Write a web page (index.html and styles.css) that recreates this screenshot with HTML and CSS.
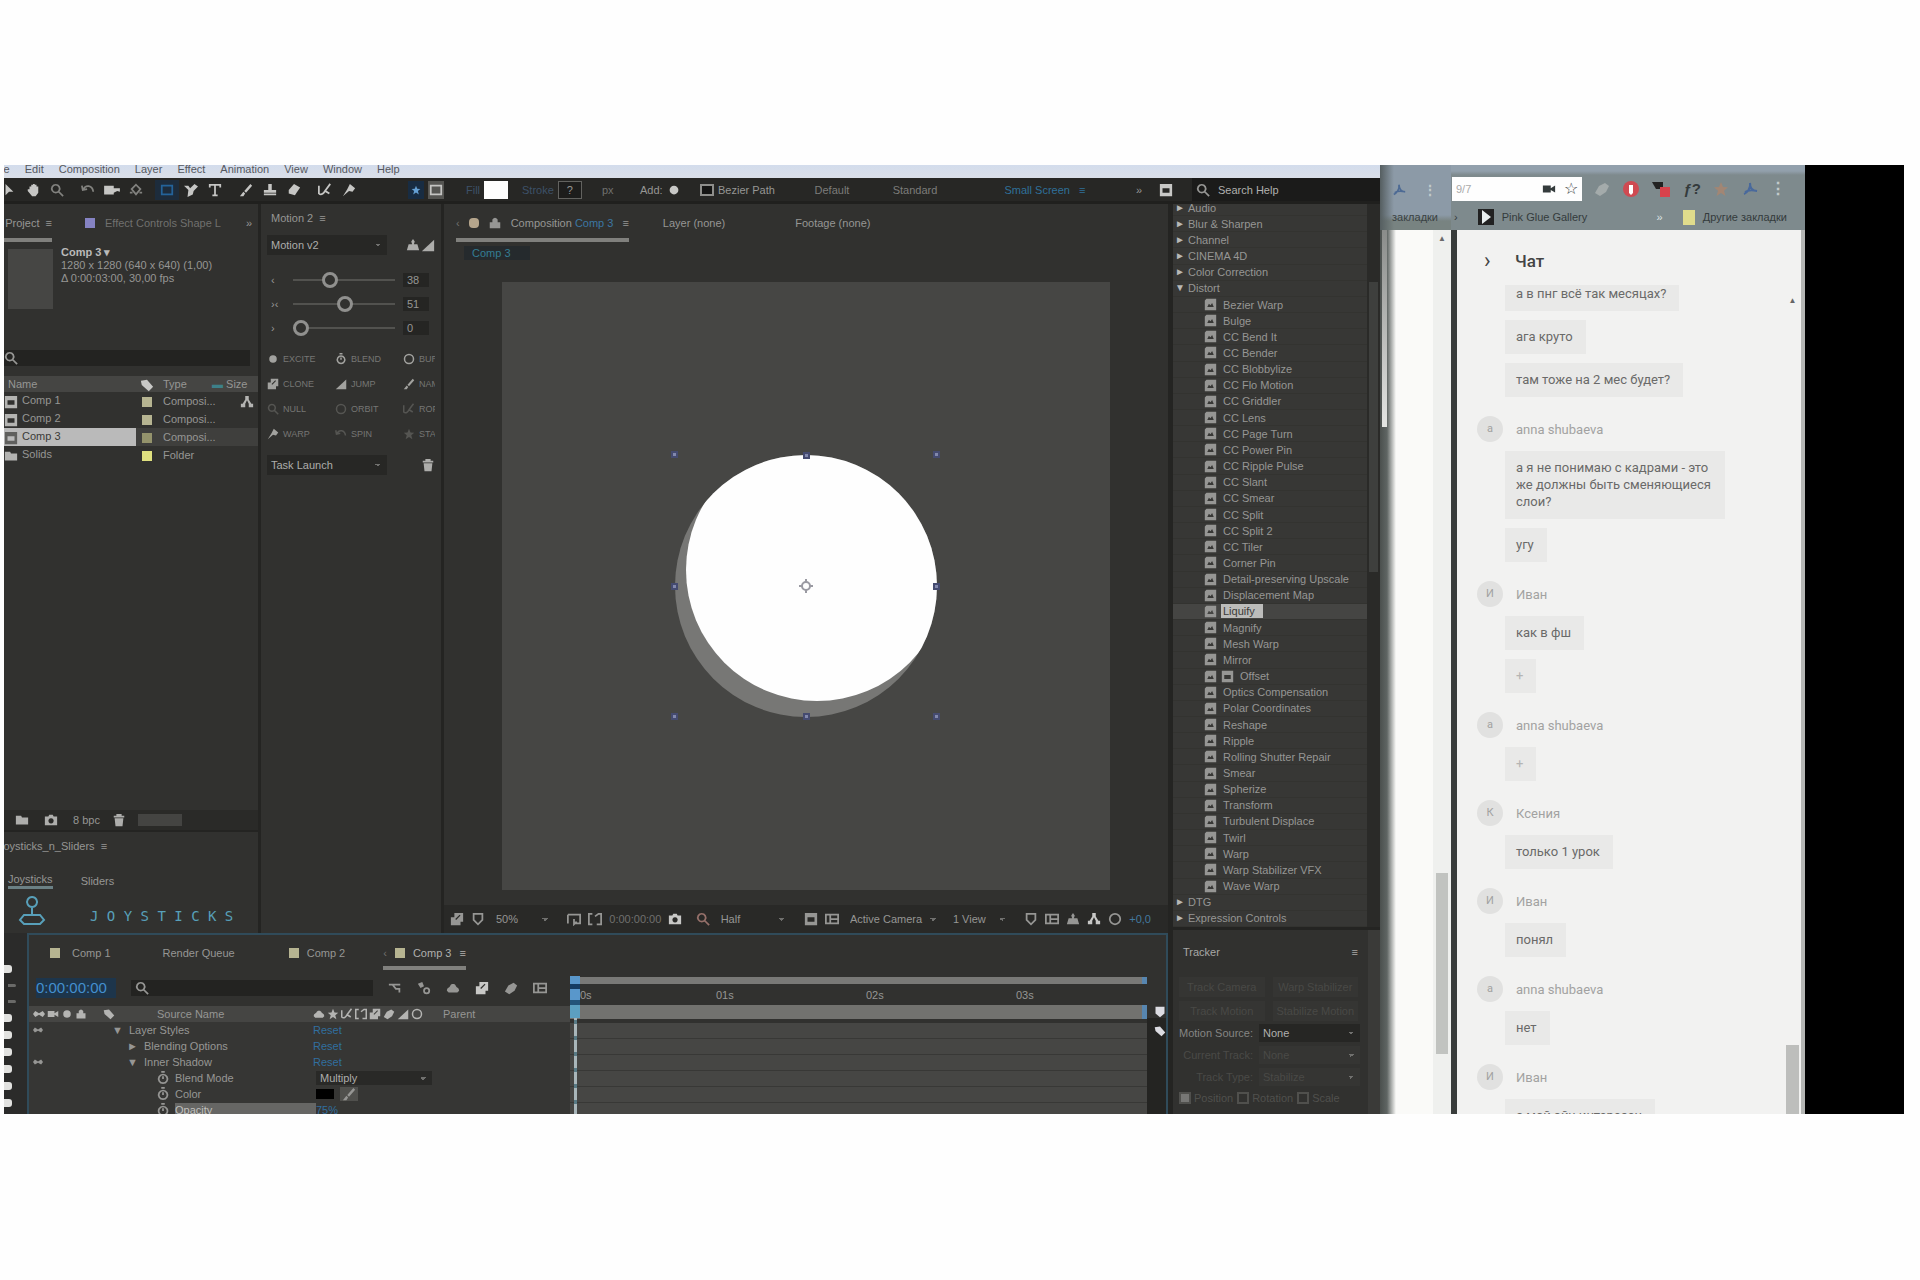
FILE: index.html
```html
<!DOCTYPE html>
<html lang="ru">
<head>
  <meta charset="UTF-8">
  <title>Вебинар</title>
  <meta name="viewport" content="width=device-width, initial-scale=1.0">
  <link rel="stylesheet" href="styles.css">
</head>
<body>

<svg class="sprite" aria-hidden="true">
  <symbol id="arrow" viewBox="0 0 16 16"><path d="M4 1l9 9H8l-4 4z"/></symbol>
  <symbol id="hand" viewBox="0 0 16 16"><path d="M4 7V4h2V2h2V1h2v1h2v2h2v7l-3 4H7L2 9V7z"/></symbol>
  <symbol id="zoom" viewBox="0 0 16 16"><path class="ln" d="M10 10l5 5M6.500 2a4.500 4.500 0 1 0 .1 0z"/></symbol>
  <symbol id="rotate" viewBox="0 0 16 16"><path class="ln" d="M3 7c2-5 10-5 11 3M1 3l1 5 5-1"/></symbol>
  <symbol id="camera" viewBox="0 0 20 16"><path d="M1 3h11v3h7v4l-3-1-4 2v2H1z"/></symbol>
  <symbol id="orbit" viewBox="0 0 16 16"><path class="ln" d="M8 2l5 5-5 6-5-6zM1 11h3M12 11h3"/></symbol>
  <symbol id="rect" viewBox="0 0 16 16"><rect class="ln" x="2" y="3" width="12" height="10"/></symbol>
  <symbol id="pen" viewBox="0 0 16 16"><path d="M0 3h5l2 3 5-5 4 3-5 5-1 4-6 3 1-8z"/></symbol>
  <symbol id="type" viewBox="0 0 16 16"><path class="ln" d="M2 5V2h12v3M8 2v12M5 14h6"/></symbol>
  <symbol id="brush" viewBox="0 0 16 16"><path d="M13 1l2 2-7 8-2-2zM5 10l2 2-2 3H1z"/></symbol>
  <symbol id="stamp" viewBox="0 0 16 16"><path d="M6 1h4v7h5v3H1V8h5zM1 12h14v2H1z"/></symbol>
  <symbol id="eraser" viewBox="0 0 16 16"><path d="M8 1l7 4-6 9-7-2V8z"/></symbol>
  <symbol id="roto" viewBox="0 0 16 16"><path class="ln" d="M1 3v9c3 3 6-1 7-3l6-8M8 9l5 3"/></symbol>
  <symbol id="flow" viewBox="0 0 16 16"><path class="ln" d="M1 4h13M5 4l4 5h4v4"/></symbol>
  <symbol id="pin" viewBox="0 0 16 16"><path d="M9 1l6 5-3 4-4-1-7 6 5-8z"/></symbol>
  <symbol id="draft" viewBox="0 0 16 16"><path d="M1 3l5-2 2 5-4 2z"/><circle class="ln" cx="11" cy="11" r="3"/></symbol>
  <symbol id="lock" viewBox="0 0 16 16"><path d="M5 7V4q3-4 6 0v3h3v7H2V7z"/></symbol>
  <symbol id="photo" viewBox="0 0 16 16"><path fill-rule="evenodd" d="M1 4h4l1-2h4l1 2h4v10H1zM8 6a3 3 0 1 0 .1 0z"/></symbol>
  <symbol id="preset" viewBox="0 0 16 16"><path fill-rule="evenodd" d="M3 1h12v14H1V3zM4 11h8l-2-5-2 3-2-2z"/></symbol>
  <symbol id="folder" viewBox="0 0 16 16"><path d="M1 3h6l1 2h7v8H1z"/></symbol>
  <symbol id="comp" viewBox="0 0 16 16"><path fill-rule="evenodd" d="M1 1h14v14H1zM4 6v5h8V6z"/></symbol>
  <symbol id="tag" viewBox="0 0 16 16"><path d="M1 3l7-1 7 8-5 5-8-7z"/></symbol>
  <symbol id="tree" viewBox="0 0 16 16"><path d="M6 1h4v4l3 5h2v4h-5v-4L8 6l-2 4v4H1v-4h2l3-5z"/></symbol>
  <symbol id="trash" viewBox="0 0 16 16"><path d="M5 1h6v2h3v2H2V3h3zM3 6h10l-1 9H4z"/></symbol>
  <symbol id="watch" viewBox="0 0 16 16"><path class="ln" d="M6 1h4M8 4a5 5 0 1 0 .1 0zM8 6v3"/></symbol>
  <symbol id="ball" viewBox="0 0 16 16"><circle class="ln" cx="8" cy="8" r="6"/></symbol>
  <symbol id="dot" viewBox="0 0 16 16"><circle cx="8" cy="8" r="5"/></symbol>
  <symbol id="star" viewBox="0 0 16 16"><path d="M8 1l2 5 5 .3-4 3.400L12.500 15 8 12l-4.500 3L5 9.700 1 6.300 6 6z"/></symbol>
  <symbol id="mask" viewBox="0 0 16 16"><path class="ln" d="M1 3h14v10H8M1 13V3M8 8v6l3-3"/></symbol>
  <symbol id="shield" viewBox="0 0 16 16"><path class="ln" d="M3 2h10v7l-5 5-5-5z"/></symbol>
  <symbol id="frame" viewBox="0 0 16 16"><path class="ln" d="M5 2H1v12h4M8 5l4-3h3v12h-5"/></symbol>
  <symbol id="grid" viewBox="0 0 16 16"><path class="ln" d="M1 3h14v10H1zM6 3v10M6 8h9"/></symbol>
  <symbol id="people" viewBox="0 0 16 16"><path d="M8 1l2 3-1 3h4l2 7H1l2-7h4L6 4z"/></symbol>
  <symbol id="shy" viewBox="0 0 16 16"><path d="M1 11c0-4 3-3 4-6 1-2 5-2 6 0 1 3 4 2 4 6l-2 2H3z"/></symbol>
  <symbol id="cubes" viewBox="0 0 16 16"><path fill-rule="evenodd" d="M5 1h10v10h-3v4H1V6h4zM7 9l5-5-1-1-5 5z"/></symbol>
  <symbol id="blur" viewBox="0 0 16 16"><path d="M5 5l6-3 4 3-3 6-6 4-5-3z"/></symbol>
  <symbol id="eye" viewBox="0 0 16 16"><path d="M0 8l3-4 5 3 5-3 3 4-3 4-5-3-5 3z"/></symbol>
  <symbol id="slope" viewBox="0 0 16 16"><path d="M1 15L15 2v13z"/></symbol>
  <symbol id="video" viewBox="0 0 16 16"><path d="M1 4h9v3l5-3v8l-5-3v3H1z"/></symbol>
  <symbol id="marker" viewBox="0 0 16 16"><path d="M2 1h12v9l-6 5-6-5z"/></symbol>
  <symbol id="joystick" viewBox="0 0 28 30"><path class="ln" d="M14 2a5 5 0 1 0 .1 0zM14 12v8M6 20h16l4 5-4 4H6l-4-4z"/></symbol>
  <symbol id="acro" viewBox="0 0 16 16"><path class="ln" d="M8 2c1 5-3 10-6 11M8 2c0 5 3 8 7 8M3 11c3-2 8-2 12-1"/></symbol>
</svg>

<main class="screen">

  <section class="app">
    <nav class="menubar">
      <a href="#">File</a><a href="#">Edit</a><a href="#">Composition</a><a href="#">Layer</a><a href="#">Effect</a><a href="#">Animation</a><a href="#">View</a><a href="#">Window</a><a href="#">Help</a>
    </nav>

    <div class="toolbar">
      <div class="tools">
        <div class="tool-group">
          <button aria-label="Selection"><svg><use href="#arrow"/></svg></button>
          <button aria-label="Hand"><svg><use href="#hand"/></svg></button>
          <button class="dim" aria-label="Zoom"><svg><use href="#zoom"/></svg></button>
        </div>
        <div class="tool-group">
          <button class="dim" aria-label="Rotate"><svg><use href="#rotate"/></svg></button>
          <button aria-label="Camera"><svg class="wide"><use href="#camera"/></svg></button>
          <button class="dim" aria-label="Pan behind"><svg><use href="#orbit"/></svg></button>
        </div>
        <div class="tool-group">
          <button class="active" aria-label="Rectangle"><svg><use href="#rect"/></svg></button>
          <button aria-label="Pen"><svg><use href="#pen"/></svg></button>
          <button aria-label="Type"><svg><use href="#type"/></svg></button>
        </div>
        <div class="tool-group">
          <button aria-label="Brush"><svg><use href="#brush"/></svg></button>
          <button aria-label="Stamp"><svg><use href="#stamp"/></svg></button>
          <button aria-label="Eraser"><svg><use href="#eraser"/></svg></button>
        </div>
        <div class="tool-group">
          <button aria-label="Roto brush"><svg><use href="#roto"/></svg></button>
          <button aria-label="Puppet pin"><svg><use href="#pin"/></svg></button>
        </div>
      </div>
      <div class="shape-mode">
        <button class="on" aria-label="Shape"><svg><use href="#star"/></svg></button>
        <button class="boxed" aria-label="Mask"><svg><use href="#rect"/></svg></button>
      </div>
      <div class="opt"><span class="blue-dim">Fill</span><button class="swatch" aria-label="Fill color"></button></div>
      <div class="opt"><span class="blue-dim">Stroke</span><button class="swatch none" aria-label="Stroke color">?</button></div>
      <div class="opt dim">px</div>
      <div class="opt">Add:<svg class="light"><use href="#dot"/></svg></div>
      <label class="opt bezier"><input type="checkbox"><span>Bezier Path</span></label>
      <button class="space">Default</button>
      <button class="space">Standard</button>
      <button class="space current">Small Screen &nbsp; ≡</button>
      <div class="opt ends"><span>»</span><svg class="wide light"><use href="#comp"/></svg></div>
      <div class="help-search"><svg><use href="#zoom"/></svg><input type="text" value="Search Help" aria-label="Search Help"></div>
    </div>

    <div class="work">
      <div class="upper">

        <div class="left-col">
          <section class="project">
            <div class="tabs project-tabs">
              <button class="tab selected">Project &nbsp;≡</button>
              <i class="chip violet"></i>
              <button class="tab dim">Effect Controls Shape L</button>
              <span class="more">»</span>
            </div>
            <div class="preview">
              <div class="thumb"></div>
              <div class="info"><b>Comp 3 ▾</b><br>1280 x 1280 (640 x 640) (1,00)<br>Δ 0:00:03:00, 30,00 fps</div>
            </div>
            <div class="search"><svg><use href="#zoom"/></svg><input type="text" aria-label="Search project"></div>
            <table class="files">
              <thead>
                <tr><th class="c-name">Name</th><th class="c-tag"><svg><use href="#tag"/></svg></th><th>Type</th><th class="c-size"><em>▬</em> Size</th></tr>
              </thead>
              <tbody>
                <tr><td><svg><use href="#comp"/></svg>Comp 1</td><td><i class="chip"></i></td><td>Composi...</td><td class="c-tree"><svg><use href="#tree"/></svg></td></tr>
                <tr><td><svg><use href="#comp"/></svg>Comp 2</td><td><i class="chip"></i></td><td>Composi...</td><td></td></tr>
                <tr class="picked"><td><svg><use href="#comp"/></svg>Comp 3</td><td><i class="chip olive"></i></td><td>Composi...</td><td></td></tr>
                <tr><td><svg><use href="#folder"/></svg>Solids</td><td><i class="chip yellow"></i></td><td>Folder</td><td></td></tr>
              </tbody>
            </table>
            <div class="project-foot"><svg><use href="#folder"/></svg><svg class="wide"><use href="#photo"/></svg><span>8 bpc</span><svg><use href="#trash"/></svg><i class="scroll"></i></div>
          </section>
          <section class="joy">
            <div class="joy-title">Joysticks_n_Sliders &nbsp;≡</div>
            <div class="joy-tabs"><button class="selected">Joysticks</button><button>Sliders</button></div>
            <div class="joy-logo"><svg><use href="#joystick"/></svg><span>J O Y S T I C K S</span></div>
          </section>
        </div>

        <section class="motion">
          <div class="motion-title">Motion 2 &nbsp;≡</div>
          <div class="motion-pick">
            <select aria-label="Version"><option>Motion v2</option></select>
            <svg><use href="#people"/></svg><svg><use href="#slope"/></svg>
          </div>
          <div class="sliders">
            <label for="s1">‹</label><input id="s1" type="range" value="34"><output>38</output>
            <label for="s2">›‹</label><input id="s2" type="range" value="51"><output>51</output>
            <label for="s3">›</label><input id="s3" type="range" value="0"><output>0</output>
          </div>
          <div class="actions">
            <button><svg><use href="#dot"/></svg>EXCITE</button><button><svg><use href="#watch"/></svg>BLEND</button><button><svg><use href="#ball"/></svg>BURST</button>
            <button><svg><use href="#cubes"/></svg>CLONE</button><button><svg><use href="#slope"/></svg>JUMP</button><button><svg><use href="#brush"/></svg>NAME</button>
            <button><svg class="faint"><use href="#zoom"/></svg>NULL</button><button><svg class="faint"><use href="#ball"/></svg>ORBIT</button><button><svg class="faint"><use href="#roto"/></svg>ROPE</button>
            <button><svg><use href="#pin"/></svg>WARP</button><button><svg class="faint"><use href="#rotate"/></svg>SPIN</button><button><svg class="faint"><use href="#star"/></svg>STARE</button>
          </div>
          <div class="motion-pick task">
            <select aria-label="Task"><option>Task Launch</option></select>
            <svg><use href="#trash"/></svg>
          </div>
        </section>

        <section class="comp">
          <div class="tabs comp-tabs">
            <button class="tab selected"><span class="dim">‹</span><i class="chip round"></i><svg><use href="#lock"/></svg><span>Composition <em>Comp 3</em></span><span>≡</span></button>
            <button class="tab">Layer (none)</button>
            <button class="tab">Footage (none)</button>
          </div>
          <a class="crumb" href="#">Comp 3</a>
          <div class="view">
            <svg class="canvas" viewBox="0 0 608 608">
              <defs><clipPath id="disc"><circle cx="304" cy="304" r="131"/></clipPath></defs>
              <rect width="608" height="608" fill="#464644"/>
              <circle cx="304" cy="304" r="131" fill="#777775"/>
              <circle cx="315" cy="288" r="131" fill="#fefefe" clip-path="url(#disc)"/>
              <g fill="#8288ac" stroke="#454b70" stroke-width="2">
                <rect x="170" y="170" width="5" height="5"/><rect x="302" y="171" width="5" height="5"/><rect x="432" y="170" width="5" height="5"/>
                <rect x="170" y="302" width="5" height="5"/><rect x="432" y="302" width="5" height="5"/>
                <rect x="170" y="432" width="5" height="5"/><rect x="302" y="432" width="5" height="5"/><rect x="432" y="432" width="5" height="5"/>
              </g>
              <g fill="none" stroke="#9a9aa2" stroke-width="2"><circle cx="304" cy="304" r="4"/><path d="M304 297v3M304 308v3M297 304h3M308 304h3"/></g>
            </svg>
          </div>
          <div class="comp-foot">
            <div class="set"><svg><use href="#cubes"/></svg><svg><use href="#shield"/></svg><select aria-label="Zoom"><option>50%</option></select></div>
            <div class="set"><svg><use href="#mask"/></svg><svg><use href="#frame"/></svg><span class="dim">0:00:00:00</span><svg class="light"><use href="#photo"/></svg></div>
            <div class="set"><svg class="red"><use href="#zoom"/></svg><select aria-label="Resolution" class="res"><option>Half</option></select></div>
            <div class="set"><svg><use href="#comp"/></svg><svg><use href="#grid"/></svg><select aria-label="Camera" class="cam"><option>Active Camera</option></select><select aria-label="Views"><option>1 View</option></select></div>
            <div class="set"><svg><use href="#shield"/></svg><svg><use href="#grid"/></svg><svg><use href="#people"/></svg><svg class="light"><use href="#tree"/></svg><svg><use href="#ball"/></svg><span class="blue">+0,0</span></div>
          </div>
        </section>
      </div>

      <div class="lower">
        <div class="strip"><i></i><i class="thin"></i><i class="thin"></i><i></i><i></i><i></i><i></i><i></i><i></i></div>
        <section class="timeline">
          <div class="tabs time-tabs">
            <button class="tab"><i class="chip"></i>Comp 1</button>
            <button class="tab">Render Queue</button>
            <button class="tab"><i class="chip"></i>Comp 2</button>
            <button class="tab selected"><span class="dim">‹</span><i class="chip"></i>Comp 3<span>≡</span></button>
          </div>
          <div class="time-body">
            <div class="layers">
              <div class="time-tools">
                <span class="clock">0:00:00:00</span>
                <div class="search"><svg><use href="#zoom"/></svg><input type="text" aria-label="Search layers"></div>
                <button aria-label="Flowchart"><svg><use href="#flow"/></svg></button>
                <button aria-label="Draft 3D"><svg><use href="#draft"/></svg></button>
                <button aria-label="Shy"><svg><use href="#shy"/></svg></button>
                <button aria-label="Frame blending"><svg class="light"><use href="#cubes"/></svg></button>
                <button aria-label="Motion blur"><svg><use href="#blur"/></svg></button>
                <button aria-label="Graph editor"><svg><use href="#grid"/></svg></button>
              </div>
              <div class="layer-head">
                <span class="l-eye"><svg><use href="#eye"/></svg><svg><use href="#video"/></svg><svg><use href="#dot"/></svg><svg><use href="#lock"/></svg></span>
                <span class="l-tag"><svg><use href="#tag"/></svg></span>
                <span class="l-name">Source Name</span>
                <span class="l-switch"><svg><use href="#shy"/></svg><svg><use href="#star"/></svg><svg><use href="#roto"/></svg><svg><use href="#frame"/></svg><svg><use href="#cubes"/></svg><svg><use href="#blur"/></svg><svg><use href="#slope"/></svg><svg><use href="#ball"/></svg></span>
                <span>Parent</span>
              </div>
              <div class="layer lv1"><svg class="see"><use href="#eye"/></svg><span class="prop">▼ &nbsp;Layer Styles</span><a href="#">Reset</a></div>
              <div class="layer lv2"><span class="see"></span><span class="prop">► &nbsp;Blending Options</span><a href="#">Reset</a></div>
              <div class="layer lv2"><svg class="see"><use href="#eye"/></svg><span class="prop">▼ &nbsp;Inner Shadow</span><a href="#">Reset</a></div>
              <div class="layer lv3"><span class="see"></span><span class="prop"><svg><use href="#watch"/></svg>Blend Mode</span><select aria-label="Blend Mode"><option>Multiply</option></select></div>
              <div class="layer lv3"><span class="see"></span><span class="prop"><svg><use href="#watch"/></svg>Color</span><i class="black"></i><svg class="drop"><use href="#brush"/></svg></div>
              <div class="layer lv3"><span class="see"></span><span class="prop hot"><svg><use href="#watch"/></svg><u>Opacity</u></span><a href="#">75%</a></div>
            </div>
            <div class="ruler">
              <div class="navbar"></div>
              <div class="ticks"><span>0s</span><span>01s</span><span>02s</span><span>03s</span></div>
              <div class="workarea"></div>
              <div class="tracks"></div>
              <div class="playhead"></div>
            </div>
            <div class="ruler-side"><svg><use href="#marker"/></svg><svg><use href="#tag"/></svg></div>
          </div>
        </section>
      </div>
    </div>

    <aside class="side">
      <div class="effects">
        <ul id="effects"></ul>
        <div class="bar"><i></i></div>
      </div>
      <section class="tracker">
        <div class="tracker-title"><span>Tracker</span><span>≡</span></div>
        <div class="tracker-buttons">
          <button disabled>Track Camera</button><button disabled>Warp Stabilizer</button>
          <button disabled>Track Motion</button><button disabled>Stabilize Motion</button>
        </div>
        <div class="field live"><label for="src">Motion Source:</label><select id="src"><option>None</option></select></div>
        <div class="field"><label for="trk">Current Track:</label><select id="trk" disabled><option>None</option></select></div>
        <div class="field"><label for="typ">Track Type:</label><select id="typ" disabled><option>Stabilize</option></select></div>
        <div class="checks">
          <label><input type="checkbox" checked disabled>Position</label>
          <label><input type="checkbox" disabled>Rotation</label>
          <label><input type="checkbox" disabled>Scale</label>
        </div>
      </section>
    </aside>
  </section>

  <section class="behind">
    <div class="behind-head">
      <div><svg><use href="#acro"/></svg><b>⋮</b></div>
      <div class="behind-mark">закладки</div>
    </div>
    <div class="behind-page"><div class="behind-scroll"><span>▲</span><i></i></div></div>
  </section>

  <section class="browser">
    <header>
      <div class="address">
        <div class="url"><input type="text" value="9/7" aria-label="Address"><svg><use href="#video"/></svg><span>☆</span></div>
        <svg class="x1"><use href="#blur"/></svg>
        <svg class="x2"><circle cx="8" cy="8" r="8" fill="#cf4a52"/><path d="M6 4h4v8l-2 2-2-2z" fill="#fff"/></svg>
        <svg class="x3" viewBox="0 0 20 16"><path d="M1 1h11v7H5z" fill="#222"/><rect x="9" y="6" width="10" height="10" fill="#d8434c"/></svg>
        <i>ƒ?</i>
        <svg class="x4"><use href="#star"/></svg>
        <svg class="x5"><use href="#acro"/></svg>
        <b>⋮</b>
      </div>
      <div class="bookmarks">
        <span>›</span>
        <svg viewBox="0 0 16 16"><rect width="16" height="16" fill="#222"/><path d="M4 1l9 7-9 7z" fill="#e8eeee"/></svg>
        <a href="#">Pink Glue Gallery</a>
        <span class="push">»</span>
        <i class="note"></i>
        <a href="#">Другие закладки</a>
      </div>
    </header>
    <div class="chat-head"><button aria-label="Свернуть">›</button><h2>Чат</h2></div>
    <div class="chat">
      <div class="messages" id="messages"></div>
      <div class="chat-scroll"><span>▲</span><i></i></div>
    </div>
  </section>

  <div class="void"></div>
</main>

<script>
const groups = ["Audio", "Blur & Sharpen", "Channel", "CINEMA 4D", "Color Correction"];
const distort = [
  "Bezier Warp", "Bulge", "CC Bend It", "CC Bender", "CC Blobbylize", "CC Flo Motion", "CC Griddler",
  "CC Lens", "CC Page Turn", "CC Power Pin", "CC Ripple Pulse", "CC Slant", "CC Smear", "CC Split",
  "CC Split 2", "CC Tiler", "Corner Pin", "Detail-preserving Upscale", "Displacement Map", "Liquify",
  "Magnify", "Mesh Warp", "Mirror", "Offset", "Optics Compensation", "Polar Coordinates", "Reshape",
  "Ripple", "Rolling Shutter Repair", "Smear", "Spherize", "Transform", "Turbulent Displace", "Twirl",
  "Warp", "Warp Stabilizer VFX", "Wave Warp"
];
const list = document.getElementById("effects");

function addGroup(name, open) {
  const li = document.createElement("li");
  li.className = "group";
  li.innerHTML = `<i>${open ? "▼" : "►"}</i><span></span>`;
  li.querySelector("span").textContent = name;
  list.appendChild(li);
}

groups.forEach(name => addGroup(name, false));
addGroup("Distort", true);
distort.forEach(name => {
  const li = document.createElement("li");
  if (name === "Liquify") li.className = "current";
  const extra = name === "Offset" ? '<svg><use href="#comp"/></svg>' : "";
  li.innerHTML = `<svg><use href="#preset"/></svg>${extra}<span>${name}</span>`;
  list.appendChild(li);
});
addGroup("DTG", false);
addGroup("Expression Controls", false);

const chat = [
  { texts: ["а в пнг всё так месяцах?", "ага круто", "там тоже на 2 мес будет?"] },
  { name: "anna shubaeva", texts: ["а я не понимаю с кадрами - это же должны быть сменяющиеся слои?", "угу"] },
  { name: "Иван", texts: ["как в фш", "+"] },
  { name: "anna shubaeva", texts: ["+"] },
  { name: "Ксения", texts: ["только 1 урок"] },
  { name: "Иван", texts: ["понял"] },
  { name: "anna shubaeva", texts: ["нет"] },
  { name: "Иван", texts: ["а мой эйч интересен"] }
];
const messages = document.getElementById("messages");
chat.forEach(item => {
  if (item.name) {
    const author = document.createElement("div");
    author.className = "author";
    author.innerHTML = `<i>${item.name[0]}</i><span>${item.name}</span>`;
    messages.appendChild(author);
  }
  item.texts.forEach(text => {
    const p = document.createElement("p");
    p.textContent = text;
    if (text === "+") p.className = "faded";
    messages.appendChild(p);
  });
});
</script>
</body>
</html>
```
FILE: styles.css
```css
* {
  box-sizing: border-box;
}

body {
  margin: 0;
  height: 100vh;
  padding: 165px 16px 166px 4px;
  background: #fefefe;
  font-family: "Liberation Sans", Arial, sans-serif;
  font-size: 11px;
  line-height: 14px;
  color: #969694;
}

button, input, select {
  font: inherit;
  color: inherit;
  background: none;
  border: none;
  padding: 0;
  margin: 0;
  white-space: nowrap;
}

select {
  appearance: none;
  padding-left: 4px;
  background-image: linear-gradient(45deg, transparent 50%, #70706e 50%), linear-gradient(-45deg, transparent 50%, #70706e 50%);
  background-size: 3px 3px;
  background-position: right 9px center, right 6px center;
  background-repeat: no-repeat;
}

a {
  color: inherit;
  text-decoration: none;
}

svg {
  width: 14px;
  height: 14px;
  flex: none;
  fill: currentColor;
}

i, em {
  font-style: normal;
}

.sprite {
  position: absolute;
  width: 0;
  height: 0;
}

.ln {
  fill: none;
  stroke: currentColor;
  stroke-width: 2;
}

.dim { color: #70706e; }
.light { color: #c8c8c6; }
.red { color: #95706a; }
.blue { color: #4379a0; }
.blue-dim { color: #3d5168; }

.screen {
  height: 100%;
  display: grid;
  grid-template-columns: minmax(0, 1fr) 71px 354px 99px;
  overflow: hidden;
}

/* editor */

.app {
  min-height: 0;
  display: grid;
  grid-template-columns: minmax(0, 1fr) 212px;
  grid-template-rows: 13px 26px minmax(0, 1fr);
  background: #242422;
}

.menubar {
  grid-column: 1 / 3;
  display: flex;
  align-items: flex-end;
  gap: 15px;
  height: 13px;
  overflow: hidden;
  background: linear-gradient(#d3dcec, #dadfe8);
  color: #55585e;
  padding-bottom: 2px;
}

.menubar a:first-child {
  margin-left: -12px;
}

.toolbar {
  grid-column: 1 / 3;
  display: grid;
  grid-template-columns: 404px 52px 56px 78px 40px 60px 100px 76px 90px minmax(0, 1fr) 62px 188px;
  align-items: center;
  background: #272725;
  border-bottom: 3px solid #20201e;
}

.tools {
  display: flex;
  gap: 7px;
  margin-left: -7px;
}

.tool-group {
  display: flex;
}

.tool-group button {
  width: 24px;
  height: 20px;
  display: flex;
  align-items: center;
  justify-content: center;
  color: #c6c6c4;
}

.tool-group button.dim {
  color: #82827f;
}

.tool-group button.active {
  color: #24639a;
  background: #1d2c3c;
}

svg.wide {
  width: 20px;
}

.shape-mode {
  display: flex;
  gap: 4px;
}

.shape-mode button {
  width: 16px;
  height: 18px;
  display: flex;
  align-items: center;
  justify-content: center;
}

.shape-mode .on {
  color: #65a0d4;
  background: #182c42;
}

.shape-mode .on svg {
  width: 10px;
}

.shape-mode .boxed {
  background: #555552;
  color: #c4c4c2;
}

.opt {
  display: flex;
  align-items: center;
  gap: 4px;
  padding-left: 6px;
}

.opt.dim {
  padding-left: 8px;
}

.swatch {
  width: 24px;
  height: 18px;
  background: #fefefe;
}

.swatch.none {
  background: #1d1d1c;
  border: 1px solid #62625f;
}

.bezier input {
  appearance: none;
  width: 14px;
  height: 12px;
  border: 2px solid #8e8e8b;
  background: #151514;
}

.space {
  color: #7c7c7a;
}

.space.current {
  color: #2f7099;
}

.ends {
  gap: 14px;
}

.help-search {
  display: flex;
  align-items: center;
  gap: 8px;
  height: 100%;
  padding-left: 4px;
  background: #1b1b1a;
}

.help-search input {
  width: 120px;
  color: #b0b0ae;
}

.work {
  min-width: 0;
  min-height: 0;
  display: grid;
  grid-template-rows: minmax(0, 1fr) 181px;
}

.upper {
  display: grid;
  grid-template-columns: 254px 180px minmax(0, 1fr);
  gap: 3px;
  min-height: 0;
}

.left-col {
  display: flex;
  flex-direction: column;
  gap: 2px;
  min-height: 0;
}

.project, .joy, .motion, .comp {
  background: #31312f;
  min-width: 0;
}

.project {
  flex: 1;
  display: flex;
  flex-direction: column;
}

.tabs {
  display: flex;
  align-items: center;
  height: 38px;
  flex: none;
}

.tab {
  height: 100%;
  display: flex;
  align-items: center;
  gap: 6px;
  padding-top: 4px;
  border-bottom: 4px solid transparent;
}

.tab.selected {
  border-color: #80807d;
}

.tab em {
  color: #3c77a3;
}

.chip {
  display: inline-block;
  flex: none;
  width: 10px;
  height: 10px;
  background: #b6b491;
}

.chip.violet { background: #8583c3; margin: 0 10px 0 33px; }
.chip.olive { background: #94936c; }
.chip.yellow { background: #dfe07f; }
.chip.round { border-radius: 4px; background: #b5a58c; }

.project-tabs .selected {
  width: 48px;
  justify-content: flex-end;
  overflow: hidden;
}

.more {
  margin: 0 6px 0 auto;
}

.preview {
  display: flex;
  gap: 8px;
  padding: 7px 0 0 4px;
  height: 104px;
  line-height: 13px;
}

.thumb {
  width: 45px;
  height: 60px;
  background: #464644;
}

.info {
  margin-top: -3px;
  white-space: nowrap;
}

.info b {
  color: #bababa;
}

.search {
  display: flex;
  align-items: center;
  height: 16px;
  background: #232321;
}

.search input {
  flex: 1;
  min-width: 0;
}

.project .search {
  margin: 4px 8px 10px 0;
}

.files {
  width: 100%;
  border-collapse: collapse;
  table-layout: fixed;
}

.files th {
  height: 16px;
  padding: 0;
  background: #454543;
  font-weight: normal;
  text-align: left;
}

.files .c-name { width: 132px; padding-left: 4px; }
.files .c-tag { width: 27px; padding-left: 4px; }
.files .c-size { width: 46px; }
.files em { color: #3d8089; }

.files td {
  height: 18px;
  padding: 0;
  white-space: nowrap;
}

.files .c-tree {
  text-align: right;
}

.files td svg {
  margin-right: 4px;
  vertical-align: middle;
  color: #b4b4b2;
}

.files .chip {
  vertical-align: middle;
  margin-left: 6px;
}

.files th svg {
  vertical-align: middle;
  color: #c8c8c6;
}

.picked td {
  background: #3f3f3d;
}

.picked td:first-child {
  background: #bababa;
  color: #3a3a38;
}

.picked td:first-child svg {
  color: #60605e;
}

.project-foot {
  display: flex;
  align-items: center;
  gap: 12px;
  height: 20px;
  margin-top: auto;
  padding-left: 11px;
  background: #2a2a28;
}

.project-foot svg {
  color: #aeaeac;
}

.project-foot .scroll {
  width: 44px;
  height: 12px;
  background: #444442;
}

.joy {
  height: 101px;
  padding: 7px 0 0 4px;
  overflow: hidden;
}

.joy-title {
  margin-left: -10px;
  white-space: nowrap;
}

.joy-tabs {
  display: flex;
  gap: 28px;
  margin-top: 19px;
}

.joy-tabs .selected {
  border-bottom: 3px solid #6b8084;
}

.joy-logo {
  display: flex;
  align-items: center;
  gap: 44px;
  margin: 6px 0 0 10px;
  color: #58a0ba;
  font-family: "DejaVu Sans Mono", monospace;
  font-size: 14px;
}

.joy-logo svg {
  width: 28px;
  height: 30px;
}

.joy-logo span {
  padding-top: 12px;
}

/* Motion panel */

.motion {
  padding: 7px 6px 0;
}

.motion-title {
  padding-left: 4px;
}

.motion-pick {
  display: flex;
  align-items: center;
  gap: 1px;
  margin-top: 10px;
  color: #adadab;
}

.motion-pick select {
  width: 120px;
  height: 20px;
  margin-right: auto;
  background-color: #272725;
}

.sliders {
  display: grid;
  grid-template-columns: 18px minmax(0, 1fr) 32px;
  column-gap: 8px;
  align-items: center;
  grid-auto-rows: 24px;
  margin-top: 13px;
}

.sliders label {
  padding-left: 4px;
}

.sliders output {
  margin-right: 6px;
  padding-left: 4px;
  background: #252523;
}

.sliders input {
  appearance: none;
  width: 100%;
  height: 16px;
  background: linear-gradient(#52524f, #52524f) center / 100% 2px no-repeat;
}

.sliders input::-webkit-slider-thumb {
  appearance: none;
  width: 16px;
  height: 16px;
  border-radius: 50%;
  border: 3px solid #90908e;
  background: #31312f;
}

.actions {
  display: grid;
  grid-template-columns: 68px 68px 32px;
  grid-auto-rows: 25px;
  margin-top: 6px;
}

.actions button {
  display: flex;
  align-items: center;
  gap: 4px;
  overflow: hidden;
  color: #767674;
  font-size: 9px;
}

.actions svg {
  color: #a2a29f;
  width: 12px;
}

.actions svg.faint {
  color: #555552;
}

.motion-pick.task {
  margin-top: 9px;
}

/* composition */

.comp {
  display: flex;
  flex-direction: column;
  min-height: 0;
}

.comp-tabs {
  gap: 34px;
  padding-left: 12px;
}

.comp-tabs .tab:last-child {
  margin-left: 36px;
}

.comp-tabs .selected {
  gap: 9px;
}

.crumb {
  width: 66px;
  margin: 4px 0 0 20px;
  padding-left: 8px;
  background: #252a2d;
  color: #347d94;
}

.view {
  flex: 1;
  min-height: 0;
  padding: 22px 0 15px;
  display: flex;
  justify-content: center;
}

.canvas {
  width: auto;
  height: 100%;
  aspect-ratio: 1;
}

.comp-foot {
  display: flex;
  align-items: center;
  justify-content: space-between;
  height: 28px;
  padding: 0 17px 0 6px;
  background: #292927;
}

.set {
  display: flex;
  align-items: center;
  gap: 7px;
}

.comp-foot select {
  width: 62px;
}

.comp-foot select.res { width: 74px; }
.comp-foot select.cam { width: 96px; }

/* timeline */

.lower {
  display: grid;
  grid-template-columns: 23px minmax(0, 1fr);
  min-height: 0;
}

.strip {
  display: flex;
  flex-direction: column;
  gap: 9px;
  padding-top: 32px;
  background: #2b2b2a;
  overflow: hidden;
}

.strip i {
  flex: none;
  width: 8px;
  height: 8px;
  border-radius: 0 3px 3px 0;
  background: #e2e2e0;
}

.strip .thin {
  height: 3px;
  margin: 2px 0 2px 4px;
  background: #6a6a68;
}

.timeline {
  border: 2px solid #304b5a;
  border-bottom: none;
  background: #31312f;
  overflow: hidden;
  min-width: 0;
}

.time-tabs {
  height: 35px;
  padding-left: 21px;
}

.time-tabs .tab {
  gap: 12px;
}

.time-tabs .tab:nth-child(2) { margin: 0 54px 0 52px; }
.time-tabs .tab:nth-child(3) { gap: 8px; }
.time-tabs .tab:nth-child(4) { margin-left: 38px; gap: 8px; color: #b0b0ae; }

.time-body {
  display: grid;
  grid-template-columns: 541px minmax(0, 1fr) 19px;
}

.time-tools {
  display: flex;
  align-items: center;
  gap: 15px;
  height: 36px;
  padding-left: 7px;
}

.time-tools .search {
  width: 242px;
}

.time-tools .search svg {
  margin-left: 4px;
}

.time-tools button {
  display: flex;
}

.clock {
  width: 80px;
  font-size: 15px;
  line-height: 20px;
  color: #438fcf;
  background: #1d354b;
}

.layer-head {
  display: flex;
  align-items: center;
  height: 16px;
  background: #454543;
  padding-left: 4px;
}

.layer-head svg {
  width: 12px;
  height: 12px;
  color: #b4b4b2;
}

.l-eye { width: 70px; display: flex; gap: 2px; }
.l-tag { width: 54px; display: flex; }
.l-name { width: 156px; }
.l-switch { width: 130px; display: flex; gap: 2px; }

.layer {
  display: flex;
  align-items: center;
  height: 16px;
  background: #363634;
  padding-left: 3px;
}

.see {
  width: 12px;
  height: 10px;
  margin-right: 68px;
}

.prop {
  display: flex;
  align-items: center;
  gap: 5px;
}

.lv1 .prop { width: 201px; }
.lv2 .prop { width: 201px; padding-left: 15px; }
.lv3 .prop { width: 204px; padding-left: 44px; }

.prop u {
  flex: 1;
  text-decoration: none;
  background: #666664;
  color: #c0c0be;
}

.layer a {
  color: #316f9f;
}

.layer select {
  width: 116px;
  height: 14px;
  color: #aeaeac;
  background-color: #292927;
}

.black {
  width: 18px;
  height: 10px;
  margin-right: 6px;
  background: #000;
}

.layer .drop {
  width: 18px;
  background: #50504d;
}

.ruler {
  position: relative;
  display: flex;
  flex-direction: column;
  min-width: 0;
}

.navbar {
  height: 7px;
  margin-top: 7px;
  background: #797977;
  border: solid #5786b0;
  border-width: 0 5px;
}

.ticks {
  display: grid;
  grid-template-columns: repeat(3, 150px) minmax(0, 1fr);
  height: 21px;
  align-items: center;
  padding-left: 4px;
}

.ticks span:first-child {
  padding-left: 6px;
}

.ticks span:not(:first-child) {
  margin-left: -8px;
}

.workarea {
  height: 14px;
  background: #72726f;
  border-right: 5px solid #5786b0;
}

.tracks {
  flex: 1;
  margin-top: 4px;
  background: repeating-linear-gradient(#464644 0 15px, #383836 15px 16px);
}

.playhead {
  position: absolute;
  top: 6px;
  bottom: 0;
  left: 0;
  width: 10px;
  background:
    linear-gradient(#5997cb 0 8px, #143c63 8px 13px, #5997cb 13px 24px, #245378 24px 29px, #5c9fc0 29px 42px, transparent 42px),
    repeating-linear-gradient(#a9b6ba 0 12px, #587a85 12px 16px) center / 3px 100% no-repeat;
}

.ruler-side {
  padding-top: 33px;
  background: linear-gradient(#31312f 48px, #242422 48px);
  color: #dcdce2;
}

.ruler-side svg {
  display: block;
  width: 12px;
  margin: 2px 0 5px 7px;
}

/* effects */

.side {
  display: grid;
  grid-template-rows: minmax(0, 1fr) 184px;
  gap: 3px;
  padding-left: 5px;
  min-height: 0;
}

.effects {
  display: grid;
  grid-template-columns: minmax(0, 1fr) 13px;
  min-height: 0;
  overflow: hidden;
  background: #373735;
}

.effects ul {
  display: grid;
  grid-auto-rows: minmax(0, 1fr);
  min-height: 0;
  margin: -4px 0 0;
  padding: 0;
  list-style: none;
}

.effects li {
  display: flex;
  align-items: center;
  gap: 4px;
  min-height: 0;
  padding-left: 31px;
  white-space: nowrap;
  border-bottom: 1px solid #333330;
}

.effects li span {
  padding: 0 2px;
}

.effects li svg {
  width: 13px;
  height: 13px;
}

.effects li.group {
  gap: 1px;
  padding-left: 2px;
}

.group i {
  width: 10px;
  font-size: 10px;
  color: #b8b8b6;
}

.effects .current {
  background: #454543;
}

.effects .current span {
  padding-right: 8px;
  background: #bcbcba;
  color: #3a3a38;
}

.bar {
  padding-top: 78px;
  background: #2a2a28;
}

.bar i {
  display: block;
  height: 290px;
  margin: 0 2px;
  background: #3e3f3d;
}

.tracker {
  padding: 15px 18px 0 6px;
  background: #31312f;
  border-right: 12px solid #3a3a38;
  overflow: hidden;
}

.tracker-title {
  display: flex;
  justify-content: space-between;
  margin: 0 -8px 0 4px;
  color: #a8a8a6;
}

.tracker-buttons {
  display: grid;
  grid-template-columns: 1fr 1fr;
  gap: 4px 8px;
  margin: 18px -8px 0 0;
}

.tracker-buttons button {
  height: 20px;
  background: #353533;
  color: #494946;
}

.field {
  display: grid;
  grid-template-columns: 80px minmax(0, 1fr);
  align-items: center;
  margin: 2px -10px 0 0;
  height: 20px;
  color: #4a4a47;
}

.field label {
  text-align: right;
  padding-right: 6px;
  white-space: nowrap;
}

.field select {
  height: 18px;
  background-color: #353533;
  opacity: 1;
}

.field.live {
  color: #858583;
}

.field.live select {
  background-color: #262624;
  color: #b0b0ae;
}

.checks {
  display: flex;
  gap: 4px;
  margin-right: -18px;
  padding-top: 4px;
  color: #50504d;
}

.checks label {
  display: flex;
  align-items: center;
  gap: 3px;
}

.checks input {
  appearance: none;
  width: 12px;
  height: 12px;
  border: 2px solid #50504d;
}

.checks input:checked {
  background: #777775;
}

/* window behind */

.behind {
  display: flex;
  flex-direction: column;
  min-height: 0;
  background:
    linear-gradient(#8a8c8a, #e4e5e3) 2px 65px / 5px 197px no-repeat,
    linear-gradient(90deg, #4b504e 0, #5f6563 7px, #fafaf8 16px);
}

.behind-head {
  height: 65px;
  padding: 18px 14px 0 12px;
  background: linear-gradient(90deg, #555e60 0, transparent 14px), linear-gradient(#8c9aa7 0 50px, #788381 56px);
  color: #3a4243;
}

.behind-head div:first-child {
  display: flex;
  justify-content: space-between;
  color: #4d6a94;
}

.behind-head b {
  color: #c2cacc;
  font-size: 14px;
}

.behind-mark {
  margin-top: 13px;
}

.behind-page {
  flex: 1;
  display: flex;
  justify-content: flex-end;
}

.behind-scroll {
  width: 18px;
  display: flex;
  flex-direction: column;
  align-items: center;
  background: #eff0ee;
  color: #6a6a6a;
  font-size: 8px;
}

.behind-scroll i {
  width: 12px;
  height: 181px;
  margin: auto 0 60px;
  background: #c1c3c0;
}

.behind-scroll span {
  padding-top: 2px;
}

/* browser with chat */

.browser {
  display: flex;
  flex-direction: column;
  min-height: 0;
  border-left: 6px solid #393c3b;
  border-right: 4px solid #b4b6b4;
  background: #f2f2f1;
}

.browser header {
  flex: none;
  height: 65px;
  margin: 0 -4px 0 -6px;
  background: linear-gradient(#92a0ac 0 6px, #7e8a8d 10px);
  color: #343b3c;
}

.address {
  display: flex;
  align-items: center;
  justify-content: space-between;
  height: 37px;
  padding: 10px 19px 0 1px;
}

.url {
  display: flex;
  align-items: center;
  gap: 8px;
  width: 130px;
  height: 24px;
  padding: 0 4px;
  background: #fefefe;
}

.url input {
  flex: 1;
  min-width: 0;
  color: #aaa;
}

.url span {
  font-size: 16px;
}

.address > svg {
  width: 16px;
  height: 16px;
}

.address > i {
  font-size: 15px;
  font-weight: bold;
}

.address > b {
  color: #c3cacc;
  font-size: 16px;
}

.x1 { color: #a4abab; }
.address > .x3 { width: 20px; }
.x4 { color: #a28674; }
.x5 { color: #49699c; }

.bookmarks {
  display: flex;
  align-items: center;
  gap: 8px;
  height: 28px;
  padding: 2px 18px 0 3px;
}

.bookmarks svg {
  width: 16px;
  height: 16px;
  margin-left: 12px;
}

.bookmarks .push {
  margin-left: auto;
  margin-right: 12px;
  color: #dde3e3;
}

.note {
  width: 12px;
  height: 15px;
  background: #e0dc8c;
}

.chat-head {
  display: flex;
  align-items: center;
  flex: none;
  height: 55px;
  padding: 6px 0 0 27px;
  color: #444;
  font-family: Roboto, sans-serif;
}

.chat-head button {
  width: 31px;
  font-size: 22px;
  text-align: left;
}

.chat-head h2 {
  margin: 0;
  font-size: 17px;
  font-weight: 500;
}

.chat {
  flex: 1;
  min-height: 0;
  display: flex;
  justify-content: space-between;
  overflow: hidden;
}

.messages {
  display: flex;
  flex-direction: column;
  align-items: flex-start;
  padding-left: 20px;
  margin-top: -8px;
  font-family: Roboto, sans-serif;
  font-size: 13px;
  line-height: 17px;
}

.messages p {
  flex: none;
  max-width: 220px;
  margin: 0 0 9px 28px;
  padding: 8px 13px 9px 11px;
  background: #e9e9e8;
  color: #6a6a69;
}

.messages p.faded {
  color: #b5b5b4;
}

.author {
  flex: none;
  display: flex;
  align-items: center;
  gap: 13px;
  height: 26px;
  margin: 10px 0 9px;
  color: #a2a2a1;
}

.author i {
  width: 26px;
  height: 26px;
  border-radius: 50%;
  background: #e1e1e0;
  text-align: center;
  font-size: 11px;
  line-height: 26px;
}

.chat-scroll {
  width: 17px;
  display: flex;
  flex-direction: column;
  justify-content: space-between;
  align-items: center;
  color: #666;
  font-size: 8px;
}

.chat-scroll span {
  padding-top: 9px;
}

.chat-scroll i {
  width: 13px;
  height: 69px;
  background: #bdbebc;
}

.void {
  background: #000;
}
```
